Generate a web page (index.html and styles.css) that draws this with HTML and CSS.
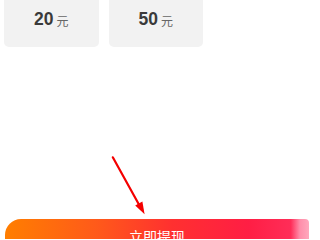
FILE: index.html
```html
<!DOCTYPE html>
<html lang="zh">
<head>
<meta charset="utf-8">
<link rel="stylesheet" href="styles.css">
</head>
<body>
<div class="page">
  <div class="amounts">
    <div class="card"><span class="num">20</span><span class="unit">元</span></div>
    <div class="card"><span class="num">50</span><span class="unit">元</span></div>
  </div>
  <button class="withdraw">立即提现</button>
  <svg class="arrow" width="320" height="239" viewBox="0 0 320 239">
    <line x1="112.8" y1="157.3" x2="139.5" y2="205.5" stroke="#f40000" stroke-width="2.2" stroke-linecap="round"/>
    <polygon points="144.6,214.2 142.4,201.4 135.2,205.4" fill="#f40000"/>
  </svg>
</div>
</body>
</html>
```

FILE: styles.css
```css
html, body {
  margin: 0;
  padding: 0;
  background: #ffffff;
  overflow: hidden;
  height: 239px;
}
.page {
  position: relative;
  width: 320px;
  height: 239px;
  overflow: hidden;
  font-family: "Liberation Sans", "Noto Sans CJK SC", sans-serif;
}
.amounts {
  display: flex;
  gap: 10px;
  padding-left: 4px;
  margin-top: -14px;
}
.card {
  width: 94.5px;
  height: 60.5px;
  background: #f2f2f2;
  border-radius: 5px;
  display: flex;
  align-items: center;
  justify-content: center;
  padding-top: 6px;
  box-sizing: border-box;
  gap: 3px;
}
.num {
  font-size: 17.5px;
  font-weight: bold;
  color: #3a3a3a;
}
.unit {
  font-size: 12px;
  color: #666666;
  font-family: "Noto Sans CJK SC", sans-serif;
  margin-top: 2px;
}
.withdraw {
  display: block;
  margin: 172px 0 0 5px;
  width: 304px;
  height: 33px;
  border: none;
  border-radius: 16px 4px 0 0;
  background: linear-gradient(to right, #ff7e00 0%, #ff5a1a 30%, #ff3030 55%, #ff1e44 80%, #ff2d58 94%, #ff8eaa 97%, #ffa8bd 100%);
  color: #ffffff;
  font-size: 14px;
  font-family: "Noto Sans CJK SC", sans-serif;
  padding: 0;
  padding-top: 1px;
  text-align: center;
  line-height: 32px;
}
.arrow {
  position: absolute;
  left: 0;
  top: 0;
  pointer-events: none;
}
```
